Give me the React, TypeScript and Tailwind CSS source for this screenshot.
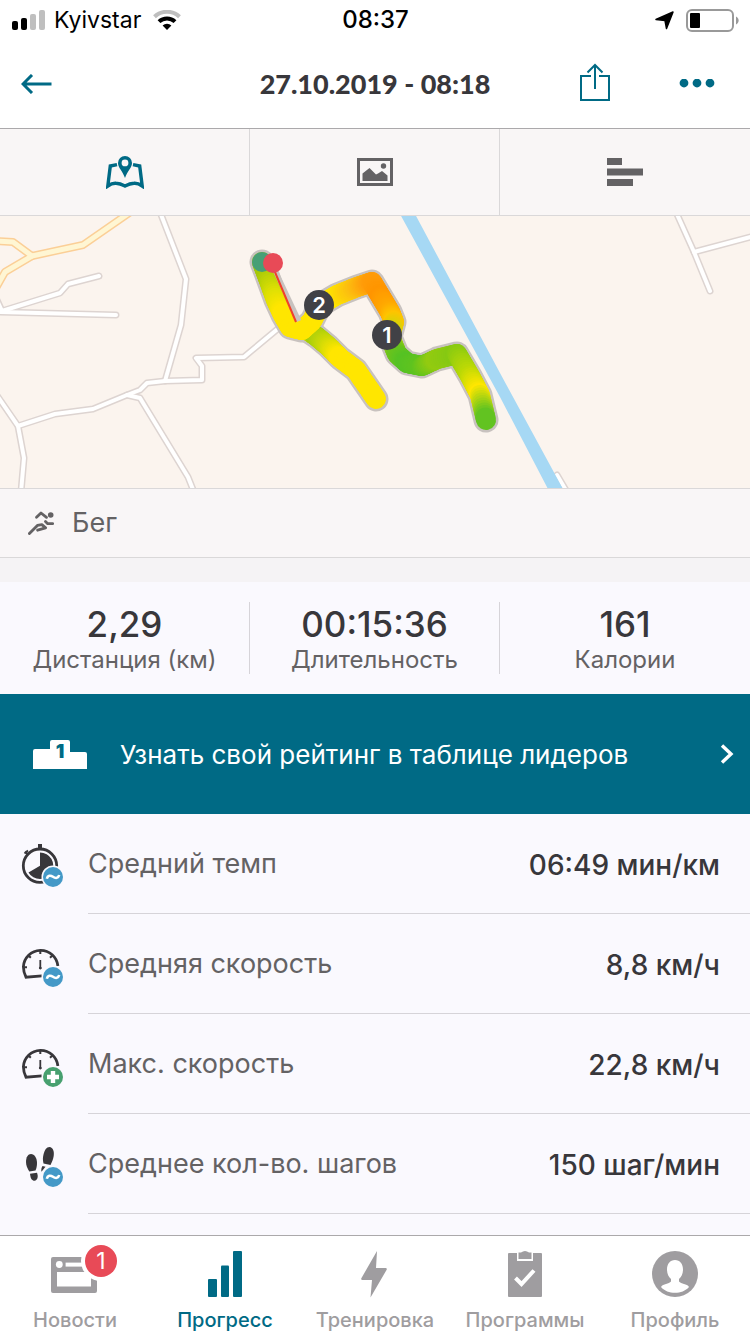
import type { ReactNode } from 'react'

type Point = [x: number, y: number, color: string]

const outbound: Point[] = [
  [262, 262, '#9cc40c'],
  [268, 278, '#a9ca08'],
  [276, 300, '#dfe004'],
  [283, 315, '#ffe600'],
  [290, 327, '#ffe600'],
  [302, 330, '#ffe600'],
  [312, 321, '#ffe600'],
  [320, 305, '#ffe600'],
  [337, 295, '#ffe600'],
  [357, 287, '#fcc010'],
  [372, 282, '#ff9d0a'],
  [381, 297, '#ff9500'],
  [390, 312, '#ffa800'],
  [394, 322, '#ffc400'],
  [390, 337, '#c9d80a'],
  [397, 354, '#6fc41c'],
  [407, 363, '#55c224'],
  [422, 366, '#5fc31f'],
  [437, 359, '#93cb10'],
  [457, 354, '#86c912'],
  [470, 376, '#b9d806'],
  [480, 395, '#ffe600'],
  [486, 420, '#62c321'],
]

const spur: Point[] = [
  [304, 328, '#ffe600'],
  [316, 336, '#a0cc0c'],
  [328, 346, '#c8d808'],
  [340, 358, '#ffe600'],
  [356, 370, '#ffe600'],
  [376, 399, '#ffe600'],
]

const roads = [
  'M160 212L186 279L181 325L165 381',
  'M18 426L55 414L93 409L127 395L140 390L147 383L165 381L202 380V366L196 358L244 357L280 327',
  'M127 395L140 398L188 477L194 492',
  'M-4 394L18 426L24 458L21 492',
  'M-4 312L116 315',
  'M2 311L60 293L68 284L99 276',
  'M-4 298L2 311',
  'M676 212L694 252L710 291',
  'M694 252L754 236',
  'M557 475L567 492',
]

const highways = ['M132 211L83 245L32 256L5 272L-4 288', 'M-4 241L13 242L32 256']

const toPath = (points: Point[]) => 'M' + points.map(([x, y]) => `${x} ${y}`).join('L')

const channels = (hex: string) => [1, 3, 5].map((i) => parseInt(hex.slice(i, i + 2), 16))

function mix(from: string, to: string, t: number) {
  const end = channels(to)
  return `rgb(${channels(from).map((c, i) => Math.round(c + (end[i] - c) * t)).join(',')})`
}

// Pace colors blend along the line, so each leg is drawn as short solid steps
const STEPS = 10

function Track({ points }: { points: Point[] }) {
  return (
    <g strokeWidth="20" strokeLinecap="round">
      {points.slice(1).flatMap(([x, y, color], i) => {
        const [px, py, prev] = points[i]
        return Array.from({ length: STEPS }, (_, s) => {
          const a = s / STEPS
          const b = (s + 1) / STEPS
          return (
            <path
              key={`${i}-${s}`}
              d={`M${px + (x - px) * a} ${py + (y - py) * a}L${px + (x - px) * b} ${py + (y - py) * b}`}
              stroke={mix(prev, color, b)}
            />
          )
        })
      })}
    </g>
  )
}

function Marker({ x, y, label }: { x: number; y: number; label: string }) {
  return (
    <g>
      <circle cx={x} cy={y} r="15" fill="#414146" />
      <text x={x} y={y + 8} textAnchor="middle" fontSize="22" fontWeight="600" fill="#fff">
        {label}
      </text>
    </g>
  )
}

function RouteMap() {
  return (
    <svg
      viewBox="0 216 750 272"
      preserveAspectRatio="xMidYMid slice"
      className="block h-[272px] w-full bg-[#fbf4ee]"
      fill="none"
      strokeLinejoin="round"
    >
      <g strokeLinecap="round">
        {roads.map((d) => <path key={d} d={d} stroke="#ddd4d1" strokeWidth="7" />)}
        {roads.map((d) => <path key={d} d={d} stroke="#fff" strokeWidth="4" />)}
        {highways.map((d) => <path key={d} d={d} stroke="#fbcf97" strokeWidth="8" />)}
        {highways.map((d) => <path key={d} d={d} stroke="#fff6d3" strokeWidth="5" />)}
      </g>
      <path d="M400 214H415L500 373L563 489H548L500 397Z" fill="#a6d8f4" />
      <g stroke="#c8c2bf" strokeWidth="25" strokeLinecap="round">
        <path d={toPath(outbound)} />
        <path d={toPath(spur)} />
      </g>
      <Track points={spur} />
      <Track points={outbound} />
      <path d="M274 268L299 321" stroke="#c8c2bf" strokeWidth="5" />
      <path d="M272 265L296 322" stroke="#f0402c" strokeWidth="2" />
      <circle cx="262" cy="262" r="10" fill="#479f76" />
      <circle cx="273" cy="263" r="10" fill="#e84a57" />
      <Marker x={319} y={305} label="2" />
      <Marker x={387} y={335} label="1" />
    </svg>
  )
}

function StatusBar() {
  return (
    <div className="grid h-10 grid-cols-[1fr_auto_1fr] items-center bg-white pr-[11px] pl-3 text-2xl text-black">
      <div className="flex items-center gap-2">
        <svg viewBox="0 0 34 20" className="h-5 w-[34px]">
          <rect y="11" width="6" height="9" rx="2" />
          <rect x="9" y="8" width="6" height="12" rx="2" />
          <rect x="18" y="4" width="6" height="16" rx="2" fill="#bfbfbf" />
          <rect x="27" width="6" height="20" rx="2" fill="#bfbfbf" />
        </svg>
        <span className="text-[23px]">Kyivstar</span>
        <svg viewBox="0 0 28 20" className="ml-1 h-5 w-7" fill="none" strokeWidth="4">
          <path d="M1.500 6.800a18 18 0 0 1 25 0" stroke="#bfbfbf" />
          <path d="M6 11.600a11.600 11.600 0 0 1 16 0" stroke="#000" />
          <path d="M9.600 15.500a6.300 6.300 0 0 1 8.800 0L14 20z" fill="#000" />
        </svg>
      </div>
      <span className="font-medium">08:37</span>
      <div className="flex items-center justify-end gap-3">
        <svg viewBox="0 0 19 19" className="size-[19px]">
          <path d="M18 1L11.500 17.500L10 9.500L1 8.500z" stroke="#000" strokeWidth="1.500" strokeLinejoin="round" />
        </svg>
        <svg viewBox="0 0 53 23" className="h-[23px] w-[53px]">
          <rect x="1" y="1" width="46" height="21" rx="5" fill="none" stroke="#999" strokeWidth="2" />
          <rect x="4" y="4" width="10" height="15" rx="1" />
          <path d="M50 7.500c3.500 1.500 3.500 6.500 0 8z" fill="#999" />
        </svg>
      </div>
    </div>
  )
}

function Header() {
  return (
    <header className="grid h-[89px] grid-cols-[1fr_auto_1fr] items-center border-b border-[#aba9ab] bg-white px-[21px] text-[#006a85]">
      <button type="button" aria-label="Назад" className="w-fit">
        <svg viewBox="0 0 31 20" className="h-5 w-[31px]" fill="none" stroke="currentColor" strokeWidth="3">
          <path d="M30.500 10H2M11 1L2 10l9 9" />
        </svg>
      </button>
      <h1 className="font-['Lato'] text-[27px] font-black text-[#38373b]">27.10.2019 - 08:18</h1>
      <div className="flex items-center justify-end gap-[69px] pr-[14px]">
        <button type="button" aria-label="Поделиться">
          <svg viewBox="0 2 30 40" className="h-10 w-[30px] overflow-visible" fill="none" stroke="currentColor" strokeWidth="2">
            <path d="M11 14H1v24h28V14H19" />
            <path d="M15 27V3M7.500 10.500L15 3l7.500 7.500" />
          </svg>
        </button>
        <button type="button" aria-label="Ещё">
          <svg viewBox="0 0 36 10" className="h-[10px] w-9" fill="currentColor">
            <circle cx="5" cy="4" r="4.400" />
            <circle cx="18" cy="4" r="4.400" />
            <circle cx="31" cy="4" r="4.400" />
          </svg>
        </button>
      </div>
    </header>
  )
}

function ViewTabs() {
  return (
    <div className="grid h-[87px] grid-cols-3 divide-x divide-[#dad8d9] border-b border-[#dad8d9] bg-[#f9f6f6] text-[#646264]">
      <button type="button" aria-label="Карта" className="flex items-center justify-center text-[#006a85]">
        <svg viewBox="106 155 38 33" className="h-[33px] w-[38px]" fill="none" stroke="currentColor" strokeWidth="3.400">
          <path d="M117 163.600L110.300 165L107.800 185Q112 182 116 182.300Q120 182.500 125 185Q130 182.500 134 182.300Q138 182 142.200 185L139.700 165L133 163.600" />
          <path
            d="M125 155a7 7 0 0 0-7 7c0 4.500 4.500 8 7 15c2.500-7 7-10.500 7-15a7 7 0 0 0-7-7zm0 3.500a3.400 3.400 0 1 1 0 6.800a3.400 3.400 0 0 1 0-6.800z"
            fill="currentColor"
            stroke="none"
            fillRule="evenodd"
          />
        </svg>
      </button>
      <button type="button" aria-label="Фото" className="flex items-center justify-center">
        <svg viewBox="0 0 36 28" className="h-7 w-9" fill="currentColor">
          <rect x="1.500" y="1.500" width="33" height="25" fill="none" stroke="currentColor" strokeWidth="3" />
          <path d="M5.500 23v-7.500l7-5.500l6.500 6.500l2-1l4-2.500l5.500 4.500V23z" />
          <circle cx="26.500" cy="8" r="2.700" />
        </svg>
      </button>
      <button type="button" aria-label="Графики" className="flex items-center justify-center">
        <svg viewBox="0 0 36 28" className="h-7 w-9" fill="currentColor">
          <rect width="15" height="7" />
          <rect y="10.500" width="36" height="7" />
          <rect y="21" width="26" height="7" />
        </svg>
      </button>
    </div>
  )
}

function AverageBadge() {
  return (
    <g>
      <circle cx="33" cy="37" r="11.500" fill="#faf9fe" />
      <circle cx="33" cy="37" r="10" fill="#4499c7" />
      <path d="M26.800 38.800c.8-3.600 3.600-3.800 6.200-2s5.300 1.600 6.200-1.800" fill="none" stroke="#fff" strokeWidth="2.600" />
    </g>
  )
}

function MaxBadge() {
  return (
    <g>
      <circle cx="33" cy="37" r="11.500" fill="#faf9fe" />
      <circle cx="33" cy="37" r="10" fill="#47a06f" />
      <path d="M33 31v12M27 37h12" stroke="#fff" strokeWidth="4.400" />
    </g>
  )
}

function Stopwatch() {
  return (
    <g fill="#38373b">
      <circle cx="20" cy="25.700" r="16.700" fill="none" stroke="#38373b" strokeWidth="2.800" />
      <path d="M20 25.700V12.400a13.300 13.300 0 1 1-11.500 20z" />
      <rect x="18" y="4" width="4" height="5" />
      <path d="M5 11.500l2.500 2.500M4.500 13.500l3.500-3" stroke="#38373b" strokeWidth="2" />
    </g>
  )
}

function Gauge() {
  return (
    <g fill="none" stroke="#38373b" strokeWidth="2.800">
      <path d="M37.900 26A17.300 17.300 0 0 0 3.400 26.700C3.400 31 4.500 34 6 37.200L22 35.800" />
      <path d="M20.300 10v4M4 27.300h3M8.500 15.500l2.300 2.300M32.300 15.500l-2.300 2.300" strokeWidth="2" />
      <path d="M20.300 20v9" strokeWidth="1.800" />
      <circle cx="20.300" cy="28" r="1" fill="#38373b" strokeWidth="1" />
    </g>
  )
}

function Footsteps() {
  return (
    <g fill="#38373b">
      <path d="M11 14c3.500 0 6 4 6 9c0 3-.5 5-1.500 7.500l-6.200 1C7.500 28.500 6 25.500 6 22c0-5 2-8 5-8z" />
      <path d="M10 33.800l7-1c1.500 4 .6 7.500-2.500 8c-2.500 0-4-2-4.500-7z" />
      <path d="M29.500 7c3.500.3 5 4.500 4.200 9c-.6 3.500-1.700 6-3.200 9l-7-1.500c-.8-3.500-.8-6 0-9c1-4.500 3-7.500 6-7.500z" />
      <path d="M22.500 26l3 .8l-4 5c-.5-2-.2-4 1-5.800z" />
    </g>
  )
}

function StatIcon({ children }: { children: ReactNode }) {
  return (
    <svg viewBox="0 0 44 48" className="h-12 w-11 shrink-0">
      {children}
    </svg>
  )
}

const summary = [
  { value: '2,29', label: 'Дистанция (км)' },
  { value: '00:15:36', label: 'Длительность' },
  { value: '161', label: 'Калории' },
]

const details = [
  { label: 'Средний темп', value: '06:49 мин/км', icon: <Stopwatch />, badge: <AverageBadge /> },
  { label: 'Средняя скорость', value: '8,8 км/ч', icon: <Gauge />, badge: <AverageBadge /> },
  { label: 'Макс. скорость', value: '22,8 км/ч', icon: <Gauge />, badge: <MaxBadge /> },
  { label: 'Среднее кол-во. шагов', value: '150 шаг/мин', icon: <Footsteps />, badge: <AverageBadge /> },
]

const navItems = [
  {
    label: 'Новости',
    count: 1,
    icon: (
      <>
        <path
          d="M2 7h42a2 2 0 0 1 2 2v32a2 2 0 0 1-2 2H2a2 2 0 0 1-2-2V9a2 2 0 0 1 2-2zM6 22v14.500h34V22z"
          fillRule="evenodd"
        />
        <circle cx="8.300" cy="14.500" r="3.400" fill="#fff" />
        <rect x="14.600" y="12.600" width="20" height="4" fill="#fff" />
      </>
    ),
  },
  {
    label: 'Прогресс',
    active: true,
    icon: (
      <>
        <rect x="7" y="29" width="9" height="18" rx="1" />
        <rect x="20" y="15.500" width="8" height="31.500" rx="1" />
        <rect x="32" y="1" width="9" height="46" rx="1" />
      </>
    ),
  },
  {
    label: 'Тренировка',
    icon: <path d="M26 1L10.500 28q-1 2 1 2H21L19.500 47.500L35.500 20q1-2-1-2H25z" />,
  },
  {
    label: 'Программы',
    icon: (
      <>
        <path d="M8 3h8v8h16V3h8a1 1 0 0 1 1 1v42a1 1 0 0 1-1 1H8a1 1 0 0 1-1-1V4a1 1 0 0 1 1-1z" />
        <path d="M17.500 2.500H20q4-3 8 0h2.500v6.500h-13z" />
        <path d="M14.500 28l6 6L33 20.500" fill="none" stroke="#fff" strokeWidth="4" />
      </>
    ),
  },
  {
    label: 'Профиль',
    icon: (
      <>
        <circle cx="24" cy="24" r="23" />
        <path
          d="M24 10c5 0 8 4 8 9.500c0 4-1.500 7.500-4 9.500v2.500c2 2.500 8 2 10 5.500c-3.500 4-8.500 5.800-14 5.800S13.500 41 10 37c2-3.500 8-3 10-5.500V29c-2.500-2-4-5.500-4-9.500c0-5.500 3-9.500 8-9.500z"
          fill="#fff"
        />
      </>
    ),
  },
]

function BottomNav() {
  return (
    <nav className="sticky bottom-0 grid h-[99px] grid-cols-5 border-t border-[#aba9ab] bg-white">
      {navItems.map(({ label, icon, active, count }) => (
        <a
          key={label}
          href="#"
          className={[
            'flex flex-col items-center gap-[10px] pt-[14px] text-xl leading-6 font-medium',
            active ? 'text-[#006a85]' : 'text-[#9f9da0]',
          ].join(' ')}
        >
          <span className="relative">
            <svg viewBox="0 0 48 48" className="size-12" fill="currentColor">
              {icon}
            </svg>
            {count && (
              <span className="absolute -top-[5px] left-[34px] flex size-8 items-center justify-center rounded-full bg-[#e84a57] text-[23px] font-normal text-white ring-4 ring-white">
                {count}
              </span>
            )}
          </span>
          {label}
        </a>
      ))}
    </nav>
  )
}

export default function App() {
  return (
    <div className="flex min-h-screen flex-col bg-[#faf9fe] font-['Inter','Liberation_Sans',sans-serif] text-[#38373b]">
      <StatusBar />
      <Header />
      <main className="flex-1">
        <ViewTabs />
        <RouteMap />
        <div className="flex h-[70px] items-center gap-[18px] border-y border-[#dad8d9] bg-[#f9f6f7] pl-7 text-[#646264]">
          <svg
            viewBox="0 0 26 24"
            className="h-6 w-[26px]"
            fill="none"
            stroke="currentColor"
            strokeWidth="2.800"
            strokeLinecap="round"
            strokeLinejoin="round"
          >
            <circle cx="22.700" cy="4" r="2.800" fill="currentColor" stroke="none" />
            <path d="M8.500 6.300L13 2l5.500 4.300" />
            <path d="M17.500 10.500l2.200 2.200h5" />
            <path d="M1.400 22.600l8-8.200l4.500-.8l3.700 3.300l-8 2.300" />
          </svg>
          <span className="text-[27px]">Бег</span>
        </div>
        <div className="h-6 bg-[#f5f3f5]" />

        <dl className="grid grid-cols-3 divide-x divide-[#d6d4d9] py-5">
          {summary.map(({ value, label }) => (
            <div key={label} className="flex h-[72px] flex-col-reverse items-center justify-end">
              <dt className="text-2xl leading-7 text-[#646264]">{label}</dt>
              <dd className="text-[35px] leading-[44px] font-medium">{value}</dd>
            </div>
          ))}
        </dl>

        <button type="button" className="flex h-[120px] w-full items-center bg-[#006a85] pr-4 pl-[33px] text-left text-white">
          <svg viewBox="0 0 54 30" className="h-[30px] w-[54px]" fill="currentColor">
            <path d="M2 10h15V3q0-2 2-2h16q2 0 2 2v10h15q2 0 2 2v15H0V12q0-2 2-2z" />
            <text x="27" y="19" textAnchor="middle" fontSize="19" fontWeight="900" fill="#006a85">
              1
            </text>
          </svg>
          <span className="ml-[33px] flex-1 text-[26px]">Узнать свой рейтинг в таблице лидеров</span>
          <svg viewBox="0 0 14 20" className="h-5 w-[14px]" fill="none" stroke="currentColor" strokeWidth="3.400">
            <path d="M2 1.500l9 8.500l-9 8.500" />
          </svg>
        </button>

        <dl>
          {details.map(({ label, value, icon, badge }) => (
            <div key={label} className="flex h-[100px] items-center gap-6 pl-5">
              <StatIcon>
                {icon}
                {badge}
              </StatIcon>
              <div className="flex h-full flex-1 items-center justify-between border-b border-[#d6d4d9] pt-[2px] pr-[30px]">
                <dt className="text-[27px] text-[#646264]">{label}</dt>
                <dd className="text-[28px] font-medium">{value}</dd>
              </div>
            </div>
          ))}
        </dl>
      </main>
      <BottomNav />
    </div>
  )
}
